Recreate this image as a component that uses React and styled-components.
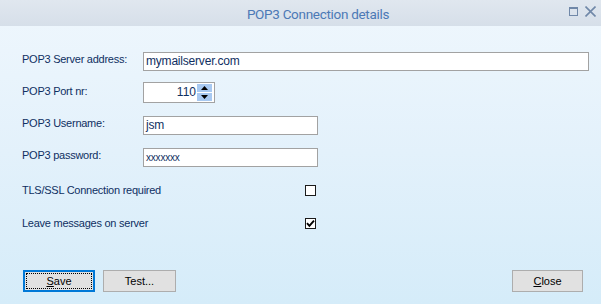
import React from "react";
import styled, { createGlobalStyle } from "styled-components";

const GlobalStyle = createGlobalStyle`
  html, body {
    margin: 0;
    padding: 0;
    width: 601px;
    height: 304px;
    overflow: hidden;
  }
  body {
    font-family: "Liberation Sans", Arial, sans-serif;
  }
`;

// Window frame
const Window = styled.div`
  width: 601px;
  height: 304px;
  display: flex;
  flex-direction: column;
  background: linear-gradient(180deg, #eff7fd 0%, #e3f1fb 50%, #d5ecf9 100%);
`;

const TitleBar = styled.div`
  height: 26px;
  flex: 0 0 26px;
  position: relative;
  display: flex;
  align-items: center;
  justify-content: center;
  padding-left: 35px;
  background: linear-gradient(180deg, #e0e7ef 0%, #d6dfe9 100%);
`;

const Title = styled.div`
  font-family: Roboto, "Open Sans", sans-serif;
  font-size: 13.5px;
  color: #4c79b6;
  letter-spacing: -0.3px;
  padding-top: 1px;
`;

const TitleButtons = styled.div`
  position: absolute;
  right: 5px;
  top: 6px;
  display: flex;
  gap: 7px;
  align-items: center;
`;

const Body = styled.div`
  flex: 1;
  display: flex;
  flex-direction: column;
  padding: 25px 12px 0 22px;
`;

const Row = styled.div`
  display: flex;
  align-items: flex-start;
  height: ${(p) => p.$h}px;
  margin-top: ${(p) => p.$mt}px;
`;

const Label = styled.div`
  width: 121px;
  flex: 0 0 121px;
  font-size: 11px;
  letter-spacing: -0.25px;
  color: #0f2f62;
  padding-top: ${(p) => p.$pt ?? 1}px;
  white-space: nowrap;
`;

const TextBox = styled.div`
  box-sizing: border-box;
  width: ${(p) => p.$w}px;
  height: 19px;
  border: 1px solid #a2a2a2;
  background: #ffffff;
  font-size: ${(p) => (p.$small ? 10 : 12)}px;
  letter-spacing: -0.2px;
  color: #0f2f62;
  padding: 1px 2px 0 2px;
  line-height: 15px;
  white-space: nowrap;
  overflow: hidden;
`;

const Spin = styled.div`
  box-sizing: border-box;
  width: 72px;
  height: 21px;
  border: 1px solid #a2a2a2;
  background: #ffffff;
  display: flex;
  align-items: stretch;
  padding: 1px 2px 1px 1px;
`;

const SpinValue = styled.div`
  flex: 1;
  text-align: right;
  font-size: 12px;
  color: #0f2f62;
  line-height: 17px;
  padding-right: 1px;
`;

const SpinButtons = styled.div`
  width: 15px;
  display: flex;
  flex-direction: column;
  gap: 1px;
`;

const SpinButton = styled.div`
  flex: 1;
  background: #a8c9f1;
  display: flex;
  align-items: center;
  justify-content: center;
`;

const CheckRow = styled.div`
  display: flex;
  align-items: center;
  height: 14px;
  margin-top: ${(p) => p.$mt}px;
`;

const CheckLabel = styled.div`
  width: 283px;
  flex: 0 0 283px;
  font-size: 11px;
  letter-spacing: -0.25px;
  color: #0f2f62;
`;

const Box = styled.div`
  box-sizing: border-box;
  width: 11px;
  height: 11px;
  border: 1px solid #1b1b1b;
  background: #ffffff;
  display: flex;
  align-items: center;
  justify-content: center;
  margin-top: 1px;
`;

const ButtonBar = styled.div`
  display: flex;
  align-items: center;
  margin-top: 40px;
  margin-left: 1px;
  padding-right: 6px;
  gap: 8px;
`;

const Spacer = styled.div`
  flex: 1;
`;

const Button = styled.div`
  box-sizing: border-box;
  width: ${(p) => p.$w ?? 73}px;
  height: 22px;
  display: flex;
  align-items: center;
  justify-content: center;
  font-size: 11px;
  color: #000;
  background: #e1e1e1;
  border: ${(p) => (p.$focused ? "2px solid #0078d7" : "1px solid #adadad")};
  position: relative;

  ${(p) =>
    p.$focused &&
    `
    &::after {
      content: "";
      position: absolute;
      inset: 1px;
      border: 1px dotted #000;
    }
  `}

  u {
    text-decoration: underline;
    text-underline-offset: 1px;
  }
`;

const Arrow = ({ up }) => (
  <svg width="7" height="4" viewBox="0 0 7 4">
    <path d={up ? "M3.5 0 L7 4 L0 4 Z" : "M0 0 L7 0 L3.5 4 Z"} fill="#000" />
  </svg>
);

const MaxIcon = () => (
  <svg width="9" height="9" viewBox="0 0 9 9">
    <rect x="0.5" y="0.5" width="8" height="8" fill="none" stroke="#7088a8" />
    <rect x="0" y="0" width="9" height="2" fill="#7088a8" />
  </svg>
);

const CloseIcon = () => (
  <svg width="11" height="11" viewBox="0 0 11 11">
    <path d="M0.5 0.5 L10.5 10.5 M10.5 0.5 L0.5 10.5" stroke="#7088a8" strokeWidth="1.6" />
  </svg>
);

const Check = () => (
  <svg width="9" height="9" viewBox="0 0 9 9">
    <path d="M1 4.2 L3.4 6.8 L8 1.6" fill="none" stroke="#000" strokeWidth="1.9" />
  </svg>
);

export default function App() {
  return (
    <>
      <GlobalStyle />
      <Window>
        <TitleBar>
          <Title>POP3 Connection details</Title>
          <TitleButtons>
            <MaxIcon />
            <CloseIcon />
          </TitleButtons>
        </TitleBar>
        <Body>
          <Row $h={19} $mt={1}>
            <Label>POP3 Server address:</Label>
            <TextBox $w={447}>mymailserver.com</TextBox>
          </Row>
          <Row $h={21} $mt={11}>
            <Label $pt={3}>POP3 Port nr:</Label>
            <Spin>
              <SpinValue>110</SpinValue>
              <SpinButtons>
                <SpinButton>
                  <Arrow up />
                </SpinButton>
                <SpinButton>
                  <Arrow />
                </SpinButton>
              </SpinButtons>
            </Spin>
          </Row>
          <Row $h={19} $mt={13}>
            <Label>POP3 Username:</Label>
            <TextBox $w={175}>jsm</TextBox>
          </Row>
          <Row $h={19} $mt={13}>
            <Label>POP3 password:</Label>
            <TextBox $w={175} $small>
              xxxxxxx
            </TextBox>
          </Row>
          <CheckRow $mt={16}>
            <CheckLabel>TLS/SSL Connection required</CheckLabel>
            <Box />
          </CheckRow>
          <CheckRow $mt={19}>
            <CheckLabel>Leave messages on server</CheckLabel>
            <Box>
              <Check />
            </Box>
          </CheckRow>
          <ButtonBar>
            <Button $w={72} $focused>
              <span>
                <u>S</u>ave
              </span>
            </Button>
            <Button>Test...</Button>
            <Spacer />
            <Button $w={71}>
              <span>
                <u>C</u>lose
              </span>
            </Button>
          </ButtonBar>
        </Body>
      </Window>
    </>
  );
}
